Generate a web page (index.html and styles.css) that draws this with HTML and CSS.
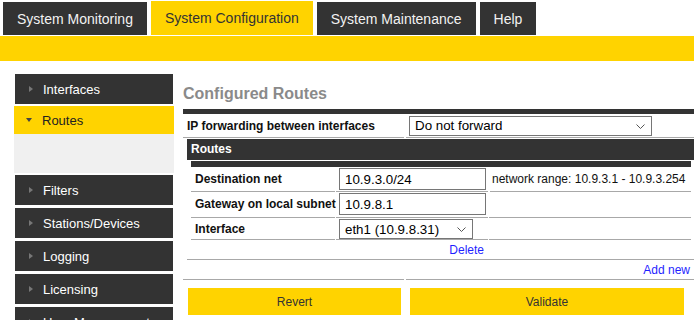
FILE: index.html
```html
<!DOCTYPE html>
<html lang="en">
<head>
<meta charset="UTF-8">
<title>System Configuration — Routes</title>
<link rel="stylesheet" href="styles.css">
</head>
<body>

<div class="tabs">
  <a class="tab">System Monitoring</a>
  <a class="tab active">System Configuration</a>
  <a class="tab">System Maintenance</a>
  <a class="tab">Help</a>
</div>
<div class="subbar"></div>

<div class="page">
  <ul class="menu">
    <li class="menu-item"><span class="arrow"></span>Interfaces</li>
    <li class="menu-item open"><span class="arrow"></span>Routes</li>
    <li class="menu-panel"></li>
    <li class="menu-item"><span class="arrow"></span>Filters</li>
    <li class="menu-item"><span class="arrow"></span>Stations/Devices</li>
    <li class="menu-item"><span class="arrow"></span>Logging</li>
    <li class="menu-item"><span class="arrow"></span>Licensing</li>
    <li class="menu-item"><span class="arrow"></span>User Management</li>
  </ul>

  <div class="content">
    <h2>Configured Routes</h2>

    <div class="cfg">
      <div class="cfg-row fwd-row">
        <div class="cell label">IP forwarding between interfaces</div>
        <div class="cell field">
          <div class="select-wrap fwd-select">
            <select><option>Do not forward</option></select>
            <svg class="chev" width="9" height="5" viewBox="0 0 9 5"><path d="M0.5 0.5 L4.5 4.5 L8.5 0.5" fill="none" stroke="#555" stroke-width="1"/></svg>
          </div>
        </div>
      </div>

      <div class="routes">
        <div class="routes-head">Routes</div>
        <div class="route">
          <div class="route-row row-dest">
            <div class="cell label">Destination net</div>
            <div class="cell field"><input type="text" value="10.9.3.0/24"></div>
            <div class="cell note">network range: 10.9.3.1 - 10.9.3.254</div>
          </div>
          <div class="route-row row-gw">
            <div class="cell label">Gateway on local subnet</div>
            <div class="cell field"><input type="text" value="10.9.8.1"></div>
            <div class="cell"></div>
          </div>
          <div class="route-row row-if">
            <div class="cell label">Interface</div>
            <div class="cell field">
              <div class="select-wrap if-select">
                <select><option>eth1 (10.9.8.31)</option></select>
                <svg class="chev" width="9" height="5" viewBox="0 0 9 5"><path d="M0.5 0.5 L4.5 4.5 L8.5 0.5" fill="none" stroke="#555" stroke-width="1"/></svg>
              </div>
            </div>
            <div class="cell"></div>
          </div>
          <div class="route-row row-del">
            <div></div>
            <div class="link-cell"><a class="link">Delete</a></div>
            <div></div>
          </div>
        </div>
      </div>

      <div class="cfg-row add-row">
        <div class="cell"></div>
        <div class="cell link-cell"><a class="link">Add new</a></div>
      </div>

      <div class="cfg-row btn-row">
        <div class="btn-cell first"><button class="btn">Revert</button></div>
        <div class="btn-cell second"><button class="btn">Validate</button></div>
      </div>
    </div>
  </div>
</div>

</body>
</html>
```

FILE: styles.css
```css
body {
  margin: 0;
  font-family: Arial, "Liberation Sans", sans-serif;
  background: #fff;
  color: #111;
}
.tabs {
  display: flex;
  align-items: flex-end;
  gap: 4px;
  height: 35px;
  padding-left: 3px;
  margin-bottom: 1px;
}
.tab {
  height: 33px;
  line-height: 34px;
  padding: 0 14px;
  background: #333;
  color: #f2f2f2;
  font-size: 14px;
  white-space: nowrap;
}
.tab.active {
  height: 34px;
  line-height: 34px;
  background: #ffd300;
  color: #333;
}
.subbar {
  height: 25px;
  background: #ffd300;
}
.page {
  display: flex;
  gap: 10px;
  padding: 13px 0 0 15px;
  height: 246px;
  overflow: hidden;
}
.menu {
  list-style: none;
  margin: 0;
  padding: 0;
  width: 158px;
  flex: none;
}
.menu-item {
  display: flex;
  align-items: center;
  height: 30px;
  padding-left: 14px;
  margin-bottom: 3px;
  background: #333;
  color: #fff;
  font-size: 13px;
}
.menu-item:first-child {
  margin-bottom: 2px;
}
.arrow {
  width: 0;
  height: 0;
  margin-right: 10px;
  border-left: 4px solid #777;
  border-top: 3px solid transparent;
  border-bottom: 3px solid transparent;
}
.menu-item.open {
  height: 28px;
  margin: 0 -1px;
  padding-left: 12px;
  background: #ffd300;
  color: #222;
}
.menu-item.open .arrow {
  border-left: 3.5px solid transparent;
  border-right: 3.5px solid transparent;
  border-top: 4px solid #444;
  border-bottom: 0;
}
.menu-panel {
  height: 39px;
  margin: 0 -1px 2px;
  background: #f0f0f0;
}
.content {
  flex: 1;
  padding-top: 10px;
}
h2 {
  margin: 0 0 5px;
  font-size: 16px;
  line-height: 20px;
  color: #8a8a8a;
}
.cfg {
  border-top: 5px solid #333;
  font-size: 12px;
}
.cfg-row {
  display: grid;
  grid-template-columns: 221px 1fr;
  column-gap: 2px;
}
.cell {
  box-sizing: border-box;
  display: flex;
  align-items: center;
  border-bottom: 1px solid #a8a8a8;
}
.label {
  font-weight: bold;
  padding-left: 4px;
  white-space: nowrap;
}
.fwd-row .cell {
  height: 24px;
}
.fwd-row .field {
  padding-left: 3px;
}
.select-wrap {
  position: relative;
}
.select-wrap select {
  display: block;
  appearance: none;
  -webkit-appearance: none;
  box-sizing: border-box;
  height: 20px;
  border: 1px solid #767676;
  border-radius: 0;
  background: #fff;
  padding: 0 5px;
  font-family: Arial, "Liberation Sans", sans-serif;
  font-size: 13.33px;
  color: #000;
}
.fwd-select select {
  width: 243px;
}
.if-select select {
  width: 134px;
}
.chev {
  position: absolute;
  right: 7px;
  top: 8px;
}
.routes {
  margin: 1px 0 0 4px;
  border-bottom: 1px solid #a8a8a8;
}
.routes-head {
  height: 21px;
  line-height: 20px;
  padding-left: 4px;
  background: #333;
  color: #fff;
  font-weight: bold;
}
.route {
  margin: 1px 3px 0 4px;
  border-top: 6px solid #333;
}
.route-row {
  display: grid;
  grid-template-columns: 144px 152px 1fr;
  column-gap: 1px;
}
.route-row .note {
  margin-left: 1px;
  padding-left: 2px;
  white-space: nowrap;
}
.route-row .field {
  align-items: flex-start;
  padding: 1px 0 0 3px;
}
.row-dest .cell {
  height: 25px;
}
.row-gw .cell {
  height: 26px;
}
.row-gw .label {
  padding-bottom: 2px;
}
.row-if .cell {
  height: 22px;
}
.route-row input {
  display: block;
  box-sizing: border-box;
  width: 147px;
  height: 22px;
  margin: 0;
  border: 1px solid #767676;
  padding: 0 5px;
  font-family: Arial, "Liberation Sans", sans-serif;
  font-size: 13.33px;
  color: #000;
}
.row-gw input {
  height: 22px;
}
.row-del {
  height: 19px;
}
.link-cell {
  display: flex;
  align-items: center;
  justify-content: flex-end;
  padding-right: 4px;
}
.link {
  color: #1f1fff;
  cursor: pointer;
}
.add-row .cell {
  height: 20px;
}
.btn-row {
  margin-top: 8px;
}
.btn-cell.first {
  padding: 0 3px 0 5px;
}
.btn-cell.second {
  padding: 0 10px 0 4px;
}
.btn {
  display: block;
  width: 100%;
  height: 27px;
  border: none;
  background: #ffd300;
  color: #333;
  font-family: Arial, "Liberation Sans", sans-serif;
  font-size: 12px;
  cursor: pointer;
}
```
